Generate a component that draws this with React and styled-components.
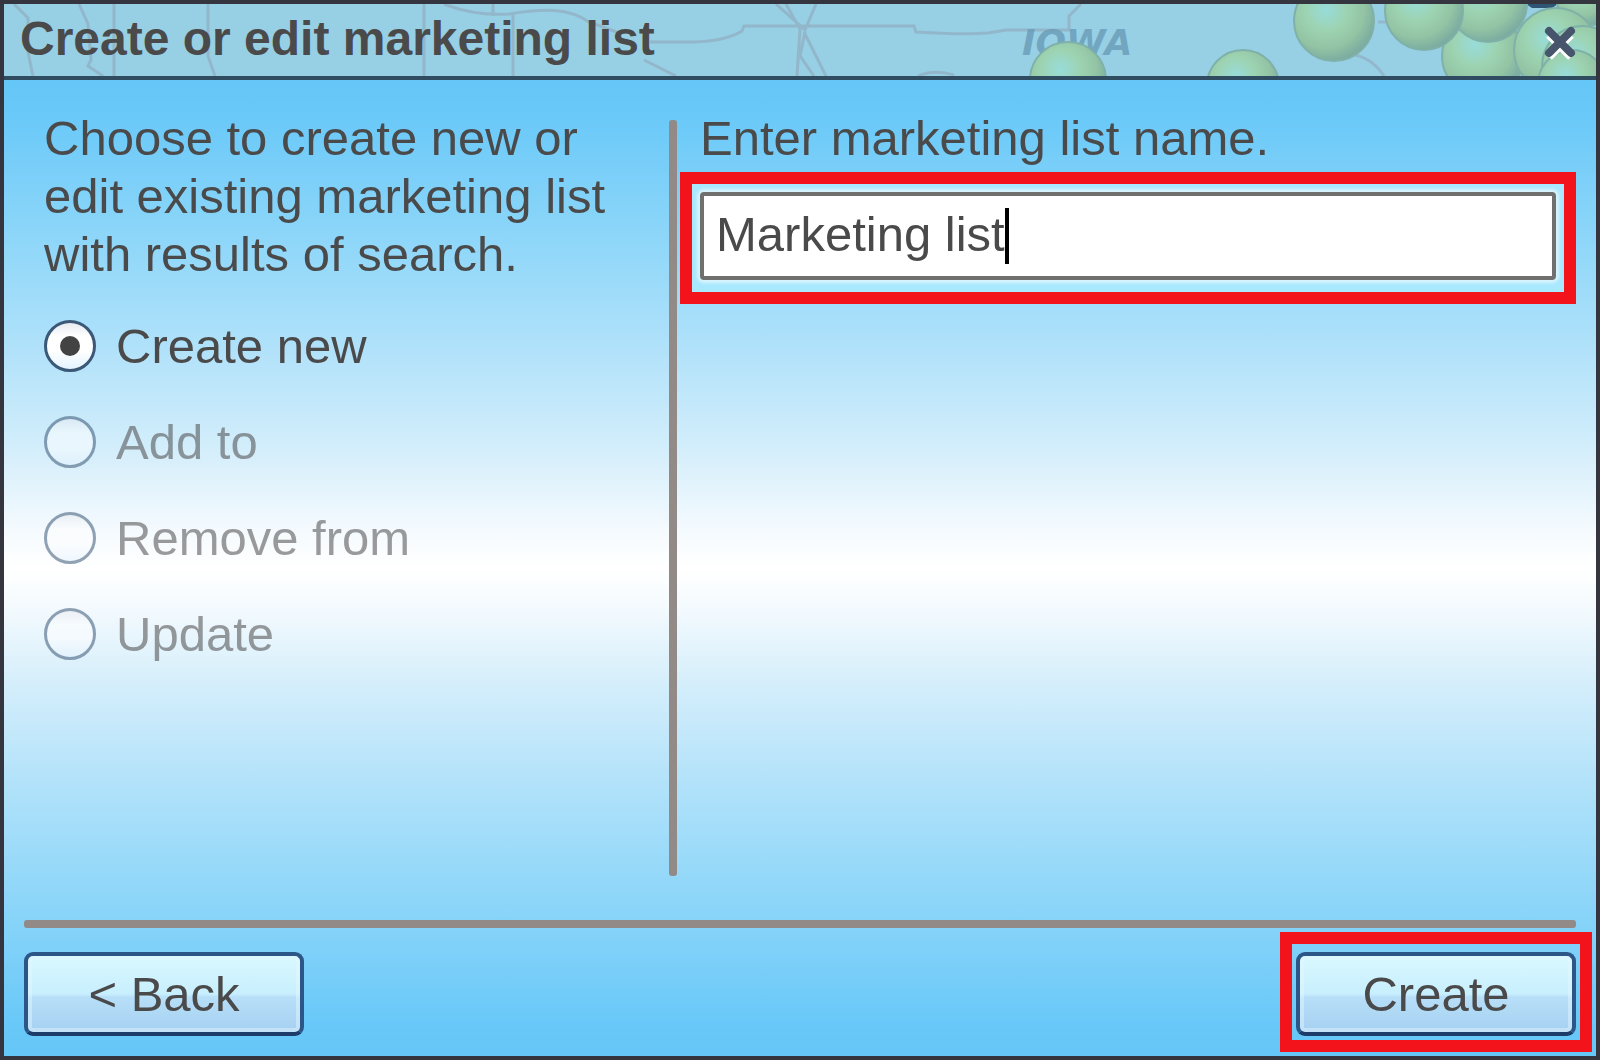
import React, { useLayoutEffect, useRef, useState } from "react";
import styled, { createGlobalStyle, css } from "styled-components";

const fontStack = '"Liberation Sans", Arial, sans-serif';

const GlobalStyle = createGlobalStyle`
  *, *::before, *::after { box-sizing: border-box; }
  body { margin: 0; background: #33333d; }
`;

const Dialog = styled.section`
  display: flex;
  flex-direction: column;
  min-height: 100vh;
  border: 4px solid #34353f;
  color: #4b4a4b;
  font-family: ${fontStack};
  font-size: 49px;
  line-height: 58px;
`;

const TitleBar = styled.header`
  position: relative;
  display: flex;
  align-items: center;
  justify-content: space-between;
  height: 76px;
  padding: 0 12px 0 16px;
  border-bottom: 4px solid #304c60;
  background: #97d0e5;
  overflow: hidden;
`;

const MapStrip = styled.svg`
  position: absolute;
  top: 0;
  right: 0;
  width: 100%;
  height: 72px;
`;

const Title = styled.h1`
  position: relative;
  margin: 0;
  padding-bottom: 2px;
  font-size: 48px;
  line-height: 68px;
  font-weight: 700;
`;

const CloseButton = styled.button`
  position: relative;
  display: flex;
  align-items: center;
  justify-content: center;
  width: 48px;
  height: 48px;
  margin-top: 8px;
  padding: 0;
  border: 0;
  background: none;
  cursor: pointer;
`;

const Content = styled.form`
  display: flex;
  flex: 1;
  flex-direction: column;
  padding: 40px 20px 20px;
  background: linear-gradient(
    #65c7f7 0%,
    #68c8f8 3%,
    #8dd6f9 16%,
    #b2e2fa 28%,
    #d4eefb 38%,
    #f4fafe 46%,
    #ffffff 50%,
    #f4fafe 54%,
    #d4eefb 62%,
    #b2e2fa 72%,
    #8dd6f9 84%,
    #68c8f8 97%,
    #65c7f7 100%
  );
`;

const Panes = styled.div`
  display: grid;
  flex: 1;
  grid-template-columns: minmax(0, 645fr) 8px minmax(0, 899fr);
  margin-bottom: 44px;
`;

const ChoicePane = styled.fieldset`
  min-width: 0;
  margin: -11px 0 0;
  padding: 0 20px;
  border: 0;
`;

const Prompt = styled.legend`
  display: block;
  max-width: 580px;
  padding: 0;
`;

const Options = styled.div`
  display: flex;
  flex-direction: column;
  gap: 38px;
  padding-top: 34px;
`;

const Option = styled.label`
  display: flex;
  align-items: center;
  gap: 20px;
  opacity: ${({ $dimmed }) => ($dimmed ? 0.55 : 1)};
`;

const Radio = styled.input`
  display: grid;
  place-items: center;
  width: 52px;
  height: 52px;
  margin: 0;
  border: 3px solid #3b5877;
  border-radius: 50%;
  appearance: none;
  background: linear-gradient(#e8eaf0, #ffffff 30%, #ffffff 60%, #e4f3ff);

  &:checked::before {
    content: "";
    width: 20px;
    height: 20px;
    border-radius: 50%;
    background: #434343;
  }
`;

const Divider = styled.hr`
  margin: 0;
  border: 0;
  border-radius: 3px;
  background: #918a87;
  ${({ $horizontal }) =>
    $horizontal
      ? css`
          width: 100%;
          height: 8px;
        `
      : css`
          width: 8px;
          height: 100%;
        `}
`;

const NamePane = styled.div`
  display: flex;
  flex-direction: column;
  gap: 5px;
  padding-left: 3px;
`;

const NameLabel = styled.label`
  margin-top: -11px;
  padding-left: 20px;
`;

const highlight = css`
  border: 12px solid #f3131b;
`;

const FieldFrame = styled.div`
  ${highlight}
  position: relative;
  padding: 8px 8px 12px;
  background: #a9e9ff;
`;

const NameInput = styled.input`
  display: block;
  width: 100%;
  height: 88px;
  padding: 0 8px 4px 12px;
  border: 4px solid #70706f;
  border-radius: 4px;
  outline: 0;
  background: #ffffff;
  box-shadow: 0 0 3px 3px #d8f4fd;
  color: inherit;
  font: inherit;
  caret-color: transparent;
`;

const Caret = styled.span`
  position: absolute;
  top: 24px;
  width: 4px;
  height: 56px;
  background: #000000;
`;

const Footer = styled.footer`
  display: flex;
  align-items: center;
  justify-content: space-between;
  margin: 4px -16px -16px 0;
`;

const ButtonFrame = styled.div`
  padding: 8px 4px 4px;
  border: 12px solid transparent;
  ${({ $highlighted }) =>
    $highlighted
      ? css`
          ${highlight}
        `
      : css`
          padding-left: 0;
          border-left: 0;
        `}
`;

const Button = styled.button`
  display: block;
  width: 280px;
  height: 84px;
  padding: 0;
  border: 4px solid #2c5687;
  border-bottom-color: #1d3c6a;
  border-radius: 9px;
  background: linear-gradient(#d9f8ff, #c8effd 50%, #b7dff8 54%, #a6d0f1);
  box-shadow: inset 0 0 0 4px #e3f6ff77;
  color: inherit;
  font: inherit;
  cursor: pointer;
`;

const choices = ["Create new", "Add to", "Remove from", "Update"];

const pins = [
  [1064, 76, 38],
  [1239, 82, 36],
  [1479, 52, 41],
  [1484, -1, 39],
  [1420, 7, 39],
  [1330, 17, 40],
  [1552, 46, 42],
  [1578, 62, 40],
  [1568, 80, 34],
];

function MapBackground() {
  return (
    <MapStrip viewBox="0 0 1592 72" preserveAspectRatio="xMaxYMid slice" aria-hidden="true">
      <defs>
        <radialGradient id="pin" cx=".4" cy=".36" r=".66">
          <stop offset="0" stopColor="#98dcda" />
          <stop offset=".4" stopColor="#9dd3b1" />
          <stop offset=".72" stopColor="#93c4a4" />
          <stop offset="1" stopColor="#79aaa0" />
        </radialGradient>
      </defs>
      <g fill="none" stroke="#8f9fb3" strokeWidth="3" opacity=".5">
        <path d="M10 0 L24 14 V48 L29 72 M75 0 L84 20 L87 56 L84 62 L99 72" />
        <path d="M110 0 V72 M204 0 V52 L211 72 M420 0 V72 M489 0 V12 M509 10 V72" />
        <path d="M440 0 Q470 12 505 10 C540 4 565 4 585 18 L618 30 M640 56 L672 72" />
        <path d="M646 38 H690 Q722 37 738 27 L740 22 H910 L912 28 Q960 31 984 29 L1002 26 H1065 L1065 12 L1077 0" />
        <path d="M772 0 L801 26 L812 0 M782 0 L796 25 L793 72 M800 28 L822 72 M801 28 L796 52 L810 72" />
        <path d="M914 72 Q930 65 950 71 M1374 18 H1394 M1345 50 Q1367 52 1380 72" />
      </g>
      <text
        x="1018"
        y="51"
        fill="#6699b4"
        opacity=".75"
        fontFamily='"DejaVu Sans", sans-serif'
        fontSize="36"
        fontStyle="italic"
        fontWeight="700"
      >
        IOWA
      </text>
      <path d="M1522 0 H1554 L1548 4 H1528Z" fill="#2e5574" />
      <g fill="url(#pin)" stroke="#7fb1a8" strokeWidth="2">
        <circle cx="1582" cy="-8" r="30" />
        {pins.map(([x, y, r]) => (
          <circle key={`${x}-${y}`} cx={x} cy={y} r={r} />
        ))}
      </g>
    </MapStrip>
  );
}

function CloseIcon() {
  return (
    <svg width="32" height="36" viewBox="0 0 32 36" fill="none" strokeWidth="8" aria-hidden="true">
      <path d="M5 9 L27 31 M27 9 L5 31" stroke="#ffffff" />
      <path d="M5 5 L27 27 M27 5 L5 27" stroke="#46556b" strokeLinecap="round" />
    </svg>
  );
}

function NameField({ value, onChange }) {
  const input = useRef(null);
  const [caretLeft, setCaretLeft] = useState(0);

  useLayoutEffect(() => {
    const style = getComputedStyle(input.current);
    const context = document.createElement("canvas").getContext("2d");
    context.font = `${style.fontSize} ${style.fontFamily}`;
    const start = input.current.offsetLeft + parseInt(style.borderLeftWidth) + parseInt(style.paddingLeft);
    setCaretLeft(Math.round(start + context.measureText(value).width));
  }, [value]);

  return (
    <FieldFrame>
      <NameInput
        id="list-name"
        ref={input}
        value={value}
        autoComplete="off"
        spellCheck={false}
        onChange={(event) => onChange(event.target.value)}
      />
      <Caret style={{ left: caretLeft }} />
    </FieldFrame>
  );
}

export default function App() {
  const [name, setName] = useState("Marketing list");

  return (
    <>
      <GlobalStyle />
      <Dialog role="dialog" aria-labelledby="dialog-title">
        <TitleBar>
          <MapBackground />
          <Title id="dialog-title">Create or edit marketing list</Title>
          <CloseButton type="button" aria-label="Close">
            <CloseIcon />
          </CloseButton>
        </TitleBar>
        <Content onSubmit={(event) => event.preventDefault()}>
          <Panes>
            <ChoicePane>
              <Prompt>Choose to create new or edit existing marketing list with results of search.</Prompt>
              <Options>
                {choices.map((choice, index) => (
                  <Option key={choice} $dimmed={index > 0}>
                    <Radio type="radio" name="action" defaultChecked={index === 0} disabled={index > 0} />
                    {choice}
                  </Option>
                ))}
              </Options>
            </ChoicePane>
            <Divider />
            <NamePane>
              <NameLabel htmlFor="list-name">Enter marketing list name.</NameLabel>
              <NameField value={name} onChange={setName} />
            </NamePane>
          </Panes>
          <Divider $horizontal />
          <Footer>
            <ButtonFrame>
              <Button type="button">&lt; Back</Button>
            </ButtonFrame>
            <ButtonFrame $highlighted>
              <Button type="submit">Create</Button>
            </ButtonFrame>
          </Footer>
        </Content>
      </Dialog>
    </>
  );
}
